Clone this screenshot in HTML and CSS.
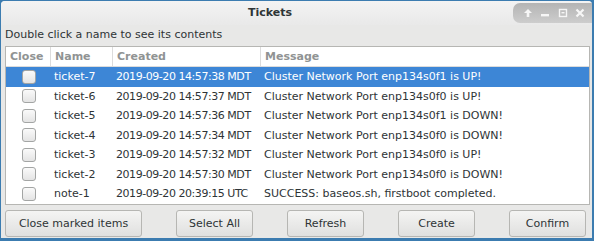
FILE: index.html
```html
<!DOCTYPE html>
<html>
<head>
    <title>Tickets</title>
    <meta charset="UTF-8">
    <link rel="stylesheet" href="styles.css">
</head>
<body>
    <div class="window">
        <div class="titlebar">
            <div class="title">Tickets</div>
            <div class="controls">
                <svg width="10" height="10" viewBox="0 0 10 10"><path d="M5 1 L9 5 L6.3 5 L6.3 9 L3.7 9 L3.7 5 L1 5 Z" fill="#f6f6f6"/></svg>
                <svg width="10" height="10" viewBox="0 0 10 10"><rect x="1" y="6" width="8" height="2.4" fill="#f6f6f6"/></svg>
                <svg width="10" height="10" viewBox="0 0 10 10"><rect x="1.5" y="1.5" width="7" height="7" fill="none" stroke="#f6f6f6" stroke-width="1.4"/><rect x="3.5" y="4" width="3" height="1.4" fill="#f6f6f6"/></svg>
                <svg width="10" height="10" viewBox="0 0 10 10"><path d="M1.5 1.5 L8.5 8.5 M8.5 1.5 L1.5 8.5" stroke="#f6f6f6" stroke-width="2.2"/></svg>
            </div>
        </div>

        <div class="hint">Double click a name to see its contents</div>

        <div class="list">
            <div class="row head">
                <div class="cell">Close</div>
                <div class="cell sep">Name</div>
                <div class="cell sep">Created</div>
                <div class="cell sep">Message</div>
            </div>
            <div class="row selected">
                <div class="cell check"><span class="box"></span></div>
                <div class="cell">ticket-7</div>
                <div class="cell date">2019-09-20 14:57:38 MDT</div>
                <div class="cell">Cluster Network Port enp134s0f1 is UP!</div>
            </div>
            <div class="row">
                <div class="cell check"><span class="box"></span></div>
                <div class="cell">ticket-6</div>
                <div class="cell date">2019-09-20 14:57:37 MDT</div>
                <div class="cell">Cluster Network Port enp134s0f0 is UP!</div>
            </div>
            <div class="row">
                <div class="cell check"><span class="box"></span></div>
                <div class="cell">ticket-5</div>
                <div class="cell date">2019-09-20 14:57:36 MDT</div>
                <div class="cell">Cluster Network Port enp134s0f1 is DOWN!</div>
            </div>
            <div class="row">
                <div class="cell check"><span class="box"></span></div>
                <div class="cell">ticket-4</div>
                <div class="cell date">2019-09-20 14:57:34 MDT</div>
                <div class="cell">Cluster Network Port enp134s0f0 is DOWN!</div>
            </div>
            <div class="row">
                <div class="cell check"><span class="box"></span></div>
                <div class="cell">ticket-3</div>
                <div class="cell date">2019-09-20 14:57:32 MDT</div>
                <div class="cell">Cluster Network Port enp134s0f0 is UP!</div>
            </div>
            <div class="row">
                <div class="cell check"><span class="box"></span></div>
                <div class="cell">ticket-2</div>
                <div class="cell date">2019-09-20 14:57:30 MDT</div>
                <div class="cell">Cluster Network Port enp134s0f0 is DOWN!</div>
            </div>
            <div class="row">
                <div class="cell check"><span class="box"></span></div>
                <div class="cell">note-1</div>
                <div class="cell date">2019-09-20 20:39:15 UTC</div>
                <div class="cell">SUCCESS: baseos.sh, firstboot completed.</div>
            </div>
        </div>

        <div class="buttons">
            <button class="wide">Close marked items</button>
            <button>Select All</button>
            <button>Refresh</button>
            <button>Create</button>
            <button>Confirm</button>
        </div>
    </div>
</body>
</html>
```

FILE: styles.css
```css
html, body {
    margin: 0;
    height: 100%;
}
body {
    background-color: #3c7cb0;
    font-family: 'DejaVu Sans', sans-serif;
    font-size: 11px;
    color: #2e3436;
    overflow: hidden;
}
.window {
    margin: 1px 2px 0 1px;
    height: 237px;
    background-color: #e8e8e7;
    border-radius: 4px 4px 0 0;
    display: flex;
    flex-direction: column;
}
.titlebar {
    height: 24px;
    display: flex;
    align-items: flex-start;
    background: linear-gradient(#f3f3f3, #e9e9e9);
    border-radius: 4px 4px 0 0;
}
.title {
    flex: 1;
    text-align: center;
    font-weight: bold;
    line-height: 24px;
    padding-left: 26px;
}
.controls {
    margin-top: 2px;
    height: 20px;
    width: 79px;
    display: flex;
    align-items: center;
    justify-content: space-around;
    padding: 0 3px 0 6px;
    box-sizing: border-box;
    background: linear-gradient(#b4b4b4, #cdcdcd);
    border-radius: 7px 0 0 7px;
}
.hint {
    margin: 2px 0 4px 4px;
    line-height: 15px;
}
.list {
    margin: 0 2px 0 4px;
    background-color: #fff;
    border: 1px solid #b6b6b3;
    height: 157px;
}
.row {
    display: grid;
    grid-template-columns: 44px 62px 148px 1fr;
    height: 19.5px;
    align-items: center;
    white-space: nowrap;
}
.row.head {
    height: 19px;
    border-bottom: 1px solid #dcdcdc;
    color: #909393;
    font-weight: bold;
    align-items: stretch;
}
.head .cell {
    line-height: 19px;
}
.cell {
    padding-left: 4px;
    overflow: hidden;
}
.cell.sep {
    border-left: 1px solid #dcdcdc;
}
.cell.date {
    letter-spacing: -0.45px;
}
.row.selected {
    background-color: #3d86d6;
    color: #fff;
}
.check {
    display: flex;
    justify-content: center;
    padding-left: 1px;
}
.box {
    width: 12px;
    height: 12px;
    border: 1px solid #a3a5a4;
    border-radius: 3px;
    background: linear-gradient(#fafafa, #e4e4e4);
}
.buttons {
    margin: 5px 6px 0 4px;
    display: flex;
    justify-content: space-between;
}
button {
    width: 77px;
    height: 27px;
    font-family: inherit;
    font-size: 11px;
    color: #2e3436;
    background: linear-gradient(#f4f4f3, #e0e0df);
    border: 1px solid #b6b6b3;
    border-radius: 3px;
    padding: 0;
}
button.wide {
    width: 137px;
}
```
